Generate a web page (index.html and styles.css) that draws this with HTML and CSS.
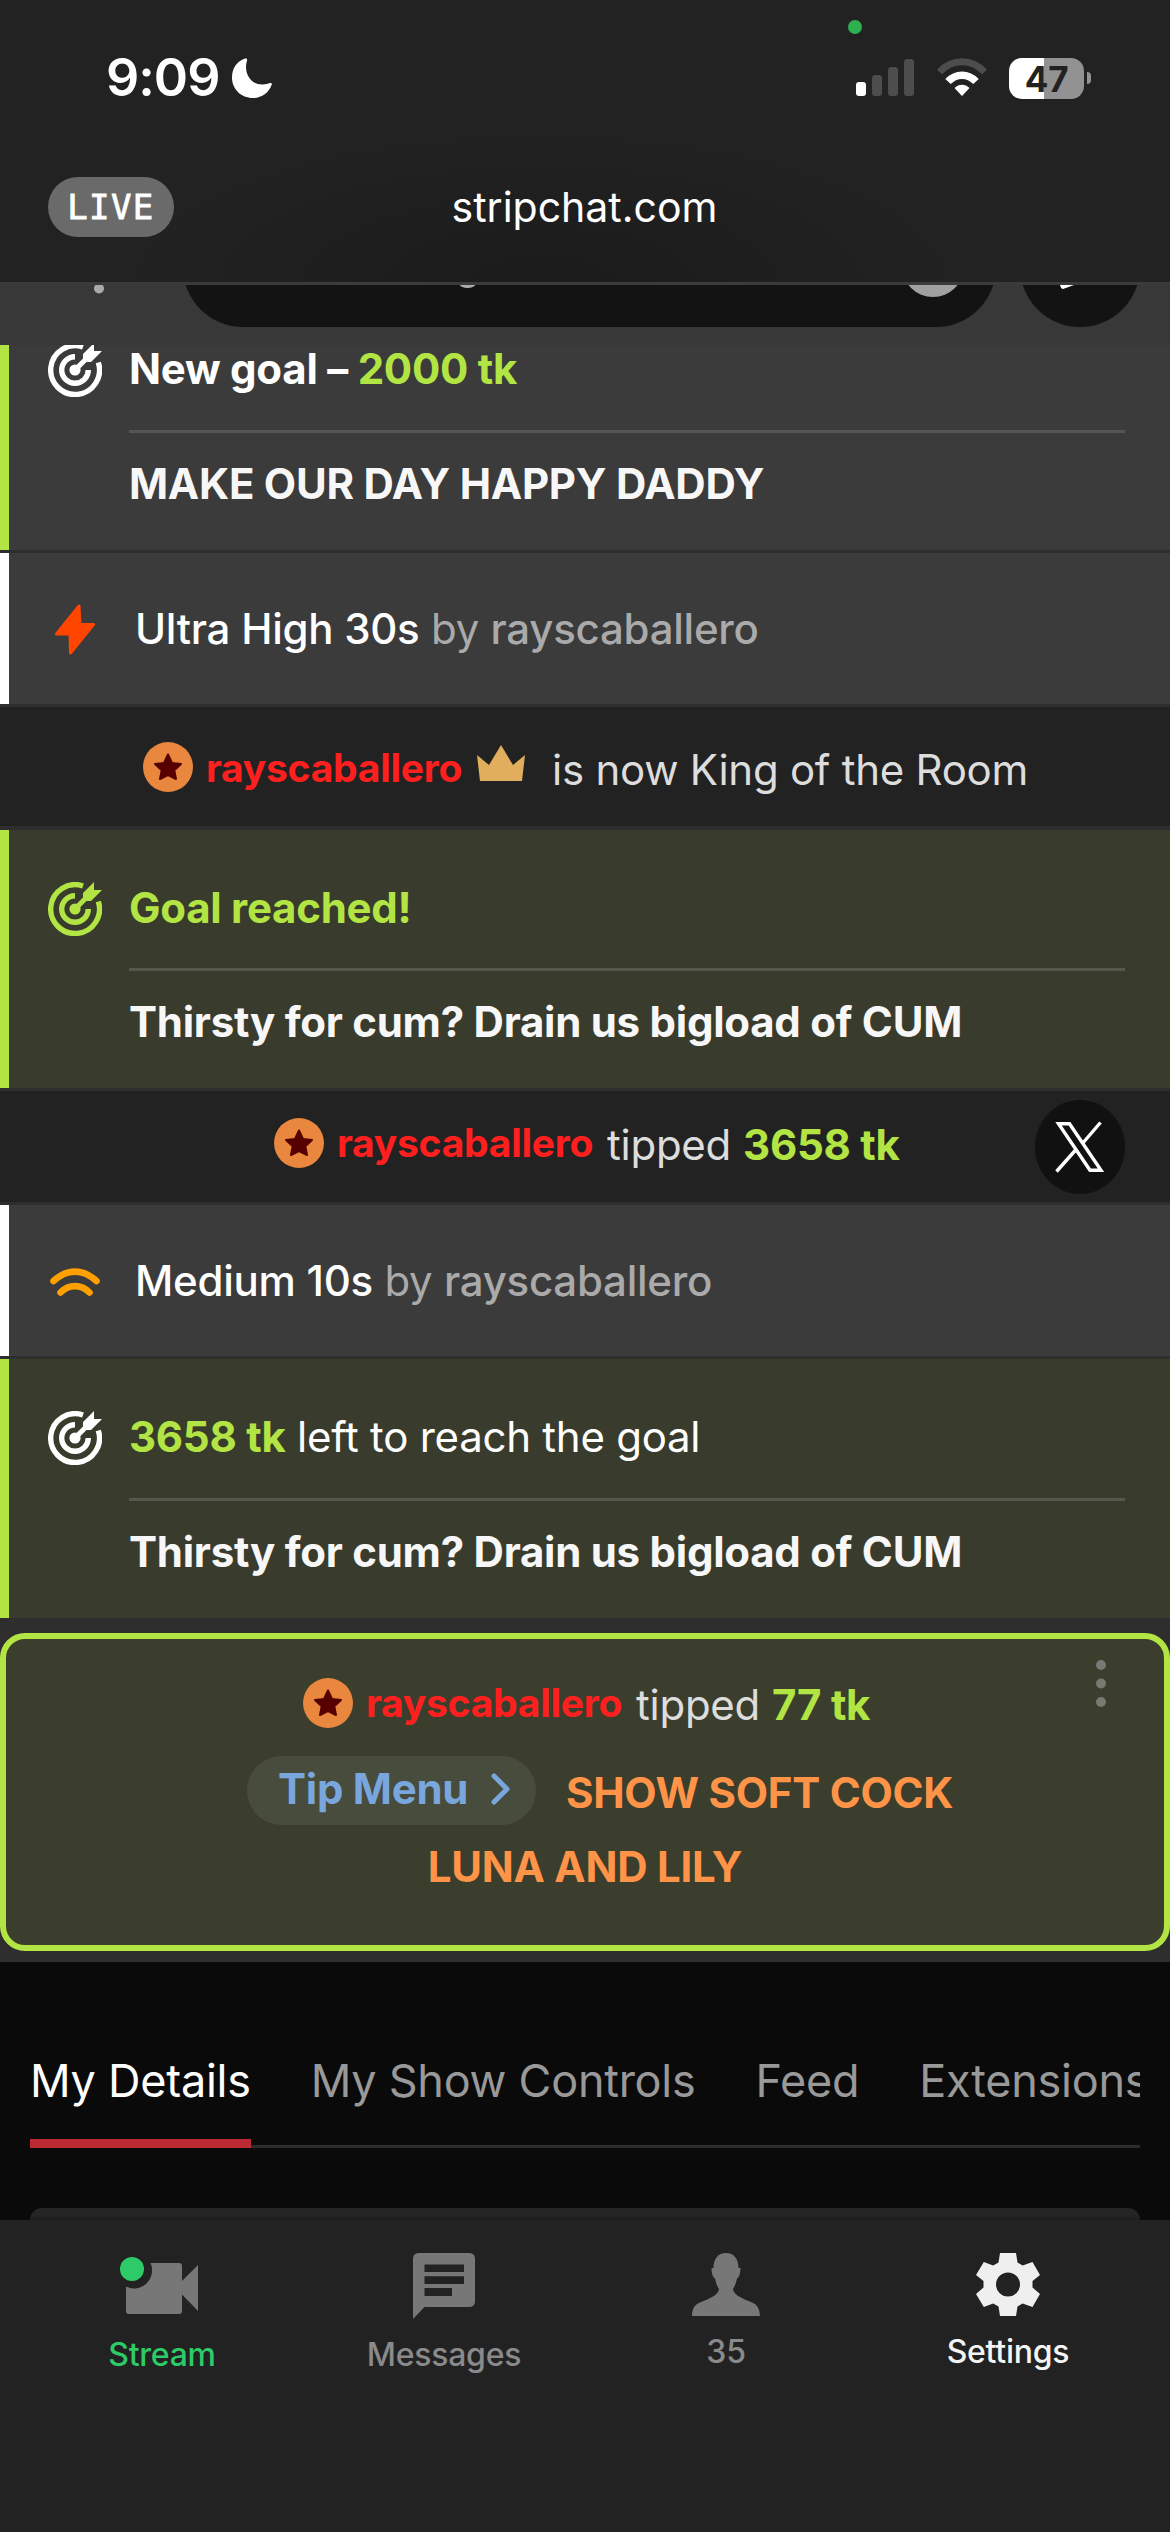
FILE: index.html
```html
<!DOCTYPE html>
<html lang="en">
<head>
<meta charset="utf-8">
<title>Stream</title>
<link rel="stylesheet" href="styles.css">
</head>
<body>
<svg class="defs" width="0" height="0" aria-hidden="true">
  <symbol id="target" viewBox="0 0 54 54">
    <path d="M35 4A24.4 24.4 0 1 0 50.3 19.500" fill="none" stroke="currentColor" stroke-width="5.400"/>
    <path d="M27 13.700A13.300 13.300 0 1 0 40.300 27" fill="none" stroke="currentColor" stroke-width="5.400"/>
    <circle cx="27" cy="27" r="5.600" fill="currentColor"/>
    <path d="M27 27L39 15" stroke="currentColor" stroke-width="5"/>
    <path d="M35 11L46 0V8H54L43 19H35Z" fill="currentColor"/>
  </symbol>
  <symbol id="badge" viewBox="0 0 50 50">
    <circle cx="25" cy="25" r="25" fill="#e9873f"/>
    <path d="M25 12.500L29 21 38 22 31.300 28.300 33 37 25 33 17 37 18.700 28.300 12 22 21 21Z" fill="#560000" stroke="#560000" stroke-width="2" stroke-linejoin="round"/>
  </symbol>
</svg>
<div class="screen">
  <header class="top">
    <i class="camera-dot"></i>
    <div class="status">
      <span class="clock">9:09</span>
      <svg class="moon" width="40" height="40" viewBox="0 0 40 40"><path d="M13 .6C15 .2 15.600 1 14.900 3C11.500 14 18 27 31 26.500C33.500 26.400 36 25.700 38 25.100C39.500 24.700 40.200 25.600 39.600 27C36.500 35 29.500 40 21 40C9 40 0 31 0 19.500C0 10.500 5 3 13 .6Z" fill="#fff"/></svg>
      <svg class="signal" width="58" height="38" viewBox="0 0 58 38"><rect y="23" width="10" height="14" rx="3" fill="#fff"/><g fill="#4d4d4d"><rect x="16" y="16" width="10" height="21" rx="3"/><rect x="32" y="8" width="10" height="29" rx="3"/><rect x="48" width="10" height="37" rx="3"/></g></svg>
      <svg class="wifi" width="50" height="38" viewBox="0 0 50 38"><path d="M2.500 13C15 -.8 35 -.8 47.500 13" fill="none" stroke="#4d4d4d" stroke-width="7"/><path d="M11 22.500C19 14 31 14 39 22.500" fill="none" stroke="#fff" stroke-width="7.500"/><path d="M17.500 29C21.500 24.500 28.500 24.500 32.500 29L25 37Z" fill="#fff"/></svg>
      <span class="battery">47</span><i class="nub"></i>
    </div>
    <div class="address"><span class="live">LIVE</span><span class="url">stripchat.com</span><span></span></div>
  </header>

  <div class="toolbar">
    <svg width="1170" height="60" viewBox="0 0 1170 60"><circle cx="99" cy="3.500" r="5" fill="#aaa"/><rect x="183" y="-78" width="813" height="120" rx="60" fill="#131313"/><ellipse cx="467.500" cy="-1" rx="8" ry="4" fill="#aaa"/><circle cx="933" cy="-19" r="31" fill="#a0a0a0"/><circle cx="1080" cy="-18" r="60" fill="#131313"/><path d="M1060 0H1074L1063 4Q1061 4 1060 0Z" fill="#fff"/></svg>
  </div>

  <main class="chat">
    <section class="goal plain first">
      <svg class="goal-icon"><use href="#target"/></svg>
      <div class="goal-body"><p class="goal-title"><b>New goal – <em>2000 tk</em></b></p><p class="goal-text">MAKE OUR DAY HAPPY DADDY</p></div>
    </section>
    <section class="toy">
      <svg class="toy-icon" width="54" height="54" viewBox="0 0 54 54"><path d="M31 4L8.500 32H22L22.500 51 45.500 22.500H32Z" fill="#ff4500" stroke="#ff4500" stroke-width="3" stroke-linejoin="round"/></svg>
      <p><b>Ultra High 30s</b> by <b class="by">rayscaballero</b></p>
    </section>
    <section class="line king">
      <svg class="badge"><use href="#badge"/></svg><b class="name">rayscaballero</b>
      <svg class="crown" width="48" height="36" viewBox="0 0 48 36"><path d="M0 10L12 20 24 0 36 20 48 10 45 36H3Z" fill="#e0ae5c"/></svg>
      <span>is now King of the Room</span>
    </section>
    <section class="goal reached">
      <svg class="goal-icon"><use href="#target"/></svg>
      <div class="goal-body"><p class="goal-title"><em>Goal reached!</em></p><p class="goal-text">Thirsty for cum? Drain us bigload of CUM</p></div>
    </section>
    <section class="line tip">
      <svg class="badge"><use href="#badge"/></svg><b class="name">rayscaballero</b>
      <span class="tipped">tipped</span><em>3658 tk</em>
      <a class="x-button"><svg width="50" height="50" viewBox="0 0 50 50" fill="none" stroke="#fff" stroke-width="3.400"><path d="M3.500 1.700H14.500L46 48.300H35Z"/><path d="M45.500 .5L27 22M1.500 49.500L21.500 27"/></svg></a>
    </section>
    <section class="toy">
      <svg class="toy-icon" width="54" height="54" viewBox="0 0 54 54" fill="none" stroke="#ff9f00" stroke-width="6.600" stroke-linecap="round"><path d="M5.500 27C19 14.500 35 14.500 48.500 27M12.500 38.500C21 30 33 30 41.500 38.500"/></svg>
      <p><b>Medium 10s</b> by <b class="by">rayscaballero</b></p>
    </section>
    <section class="goal">
      <svg class="goal-icon"><use href="#target"/></svg>
      <div class="goal-body"><p class="goal-title"><em>3658 tk</em> left to reach the goal</p><p class="goal-text">Thirsty for cum? Drain us bigload of CUM</p></div>
    </section>
    <section class="card">
      <div class="line card-line"><svg class="badge"><use href="#badge"/></svg><b class="name">rayscaballero</b><span class="tipped">tipped</span><em>77 tk</em></div>
      <div class="menu-line"><a class="menu">Tip Menu<svg width="20" height="32" viewBox="0 0 20 32" fill="none" stroke="#79a6dc" stroke-width="5" stroke-linecap="round" stroke-linejoin="round"><path d="M3 3L16 16 3 29"/></svg></a><span class="item">SHOW SOFT COCK</span></div>
      <div class="item item-last">LUNA AND LILY</div>
      <svg class="more" width="10" height="47" viewBox="0 0 10 47" fill="#777a72"><circle cx="5" cy="5" r="5"/><circle cx="5" cy="23.500" r="5"/><circle cx="5" cy="42" r="5"/></svg>
    </section>
  </main>

  <nav class="tabs"><span class="tab active">My Details</span><span class="tab">My Show Controls</span><span class="tab">Feed</span><span class="tab">Extensions</span></nav>
  <div class="panel"></div>

  <footer class="bottom">
    <a class="nav stream"><svg width="78" height="68" viewBox="0 0 78 68"><path d="M27.500 12H56Q59 12 59 15V30L75 14V60L59 43.500V60Q59 63 56 63H6Q3 63 3 60V35.500A18 18 0 0 0 27.500 12Z" fill="#777"/><circle cx="9" cy="18" r="12" fill="#2dcb67"/></svg><span>Stream</span></a>
    <a class="nav"><svg width="62" height="68" viewBox="0 0 62 68"><path d="M6 2H56Q62 2 62 8V50Q62 56 56 56H11.500L0 68V8Q0 2 6 2Z" fill="#777"/><path d="M11.500 13.500H51V21H11.500ZM11.500 25.300H51V33H11.500ZM11.500 37H39V45H11.500Z" fill="#222"/></svg><span>Messages</span></a>
    <a class="nav up"><svg width="68" height="68" viewBox="0 0 68 68"><g transform="translate(0 2)"><path d="M34 0C42 0 46.500 6 46.500 15H48.500C48.500 20 47.500 24 45 25.500C44 30 43 33 41 36C42 42 48 44 54 47C62 50.500 67.500 51 68 63H0C.5 51 6 50.500 14 47C20 44 26 42 27 36C25 33 24 30 23 25.500C20.500 24 19.500 20 19.500 15H21.500C21.500 6 26 0 34 0Z" fill="#777"/></g></svg><span>35</span></a>
    <a class="nav up on"><svg width="64" height="68" viewBox="0 0 64 68"><path transform="translate(0 2)" fill="#efefef" fill-rule="evenodd" d="M24 0H40L41.500 9.500 46.600 12.500 56.500 9 64 22 56.500 28V34.500L64 41 56.500 54 46.600 50.500 41.500 53.500 40 63H24L22.500 53.500 17.200 50.500 7.800 54 0 41 7.500 34.500V28L0 22 7.800 9 17.200 12.500 22.500 9.500ZM32 19.500A12 12 0 1 0 32 43.500A12 12 0 1 0 32 19.500Z"/></svg><span>Settings</span></a>
  </footer>
</div>
</body>
</html>
```
FILE: styles.css
```css
* { box-sizing: border-box; }
body { margin: 0; background: #0a0a0a; }
p { margin: 0; }
b, em { font-style: normal; font-weight: 700; }
svg { display: block; flex: none; overflow: visible; }
.defs { position: absolute; }

.screen {
  display: flex;
  flex-direction: column;
  width: 1170px;
  height: 2532px;
  overflow: hidden;
  font: 400 42px/60px Inter, "Liberation Sans", sans-serif;
  letter-spacing: -.26px;
  color: #fff;
  white-space: nowrap;
}

/* Status bar and address */
.top {
  position: relative;
  flex: none;
  height: 285px;
  background: radial-gradient(ellipse 420px 150px at 540px 282px, #1b1b1b, #222 100%);
  border-bottom: 3px solid #3b3b3b;
}
.camera-dot { position: absolute; left: 848px; top: 20px; width: 14px; height: 14px; border-radius: 50%; background: #2fb04f; }
.status { display: flex; align-items: center; height: 156px; padding: 0 0 0 106px; }
.clock { width: 126px; font-size: 52px; font-weight: 600; letter-spacing: -1px; }
.signal { margin-left: 584px; }
.wifi { margin-left: 23px; }
.battery {
  width: 75px;
  height: 41px;
  margin-left: 22px;
  border-radius: 13px;
  background: linear-gradient(90deg, #fff 35px, #929292 35px);
  color: #222;
  font-size: 35px;
  font-weight: 700;
  line-height: 42px;
  text-align: center;
}
.nub { width: 4px; height: 12px; margin-left: 3px; border-radius: 0 4px 4px 0; background: #929292; }
.address { display: grid; grid-template-columns: 1fr auto 1fr; align-items: center; height: 102px; padding: 0 49px 0 48px; }
.live {
  justify-self: start;
  width: 126px;
  height: 60px;
  border-radius: 30px;
  background: #6a6a6a;
  font: 400 34px/60px "DejaVu Sans Mono", monospace;
  letter-spacing: 1.400px;
  text-align: center;
  -webkit-text-stroke: .8px #fff;
}
.url { font-size: 41px; letter-spacing: 0; }

.toolbar { flex: none; height: 60px; overflow: hidden; background: #383838; }
.toolbar svg { overflow: hidden; }

/* Chat feed */
.chat { flex: none; height: 1617px; overflow: hidden; background: #2e2e2e; }
.goal {
  display: flex;
  height: 259px;
  padding: 48px 45px 0 39px;
  border-left: 9px solid #b2e544;
  background: #393c2d;
}
.plain { background: #3b3b3b; }
.first { margin-top: -54px; }
.goal-icon { width: 54px; height: 54px; margin: 4px 27px 0 0; }
.goal em, .line em { color: #b2e544; }
.goal-body { flex: 1; }
.goal-title { height: 94px; border-bottom: 3px solid #55584a; }
.plain .goal-title { border-color: #555; }
.goal-text { margin-top: 21px; font-weight: 700; color: #f7f7f7; }
.reached { height: 258px; margin-top: 4px; }
.reached .goal-title { height: 93px; }
.reached .goal-icon { color: #b2e544; }
.toy {
  display: flex;
  align-items: center;
  height: 151px;
  margin: 3px 0;
  padding-left: 39px;
  border-left: 9px solid #fff;
  background: #3b3b3b;
  color: #aaa;
}
.toy-icon { margin-right: 33px; }
.toy b { font-weight: 500; color: #fff; }
.toy .by { color: #aaa; }
.line { display: flex; align-items: center; background: #222; color: #ddd; }
.badge { width: 50px; height: 50px; margin: 0 13px 5px 0; }
.name { margin-bottom: 4px; font-size: 39px; color: #ff1f1f; }
.king { height: 119px; padding: 6px 0 0 143px; }
.crown { margin: 0 27px 14px 15px; }
.tip { position: relative; height: 111px; margin-top: 3px; padding: 0 0 3px 274px; }
.tipped { margin: 0 12px 0 14px; }
.x-button {
  position: absolute;
  left: 1035px;
  top: 9px;
  display: flex;
  align-items: center;
  justify-content: center;
  width: 90px;
  height: 94px;
  border-radius: 50%;
  background: #111;
}
.card {
  position: relative;
  height: 318px;
  margin-top: 15px;
  padding-top: 36px;
  border: 6px solid #b2e544;
  border-radius: 25px;
  background: #3b3e2d;
}
.card-line { height: 60px; padding-left: 297px; background: none; }
.menu-line { display: flex; align-items: center; height: 69px; margin-top: 21px; padding-left: 241px; }
.menu {
  display: flex;
  align-items: center;
  justify-content: space-between;
  width: 289px;
  height: 69px;
  margin-right: 30px;
  padding: 0 25px 3px 31px;
  border-radius: 35px;
  background: #484c3c;
  color: #79a6dc;
  font-weight: 700;
}
.item { color: #ff9448; font-weight: 700; }
.menu-line .item { padding-top: 4px; }
.item-last { margin-top: 12px; text-align: center; }
.more { position: absolute; right: 58px; top: 21px; }

/* Section tabs */
.tabs {
  display: flex;
  flex: none;
  gap: 60px;
  height: 186px;
  margin: 0 30px;
  padding-top: 89px;
  overflow: hidden;
  box-shadow: inset 0 -3px #2c2c2c;
  color: #999;
  font-size: 45px;
}
.tab { flex: none; height: 97px; }
.active { color: #fff; border-bottom: 9px solid #bd2a33; }
.panel { flex: none; height: 12px; margin: 60px 30px 0; border-radius: 14px 14px 0 0; background: linear-gradient(#252525 60%, #1c1c1c); }

.bottom { display: flex; flex: 1; padding: 31px 21px 0; background: #222; }
.nav { display: flex; flex: 1; flex-direction: column; align-items: center; color: #8a8a8a; font-size: 32px; line-height: 40px; font-weight: 500; }
.nav span { margin-top: 16px; }
.up span { margin-top: 13px; }
.stream { color: #2dcb67; }
.on { color: #f4f4f4; }
```
